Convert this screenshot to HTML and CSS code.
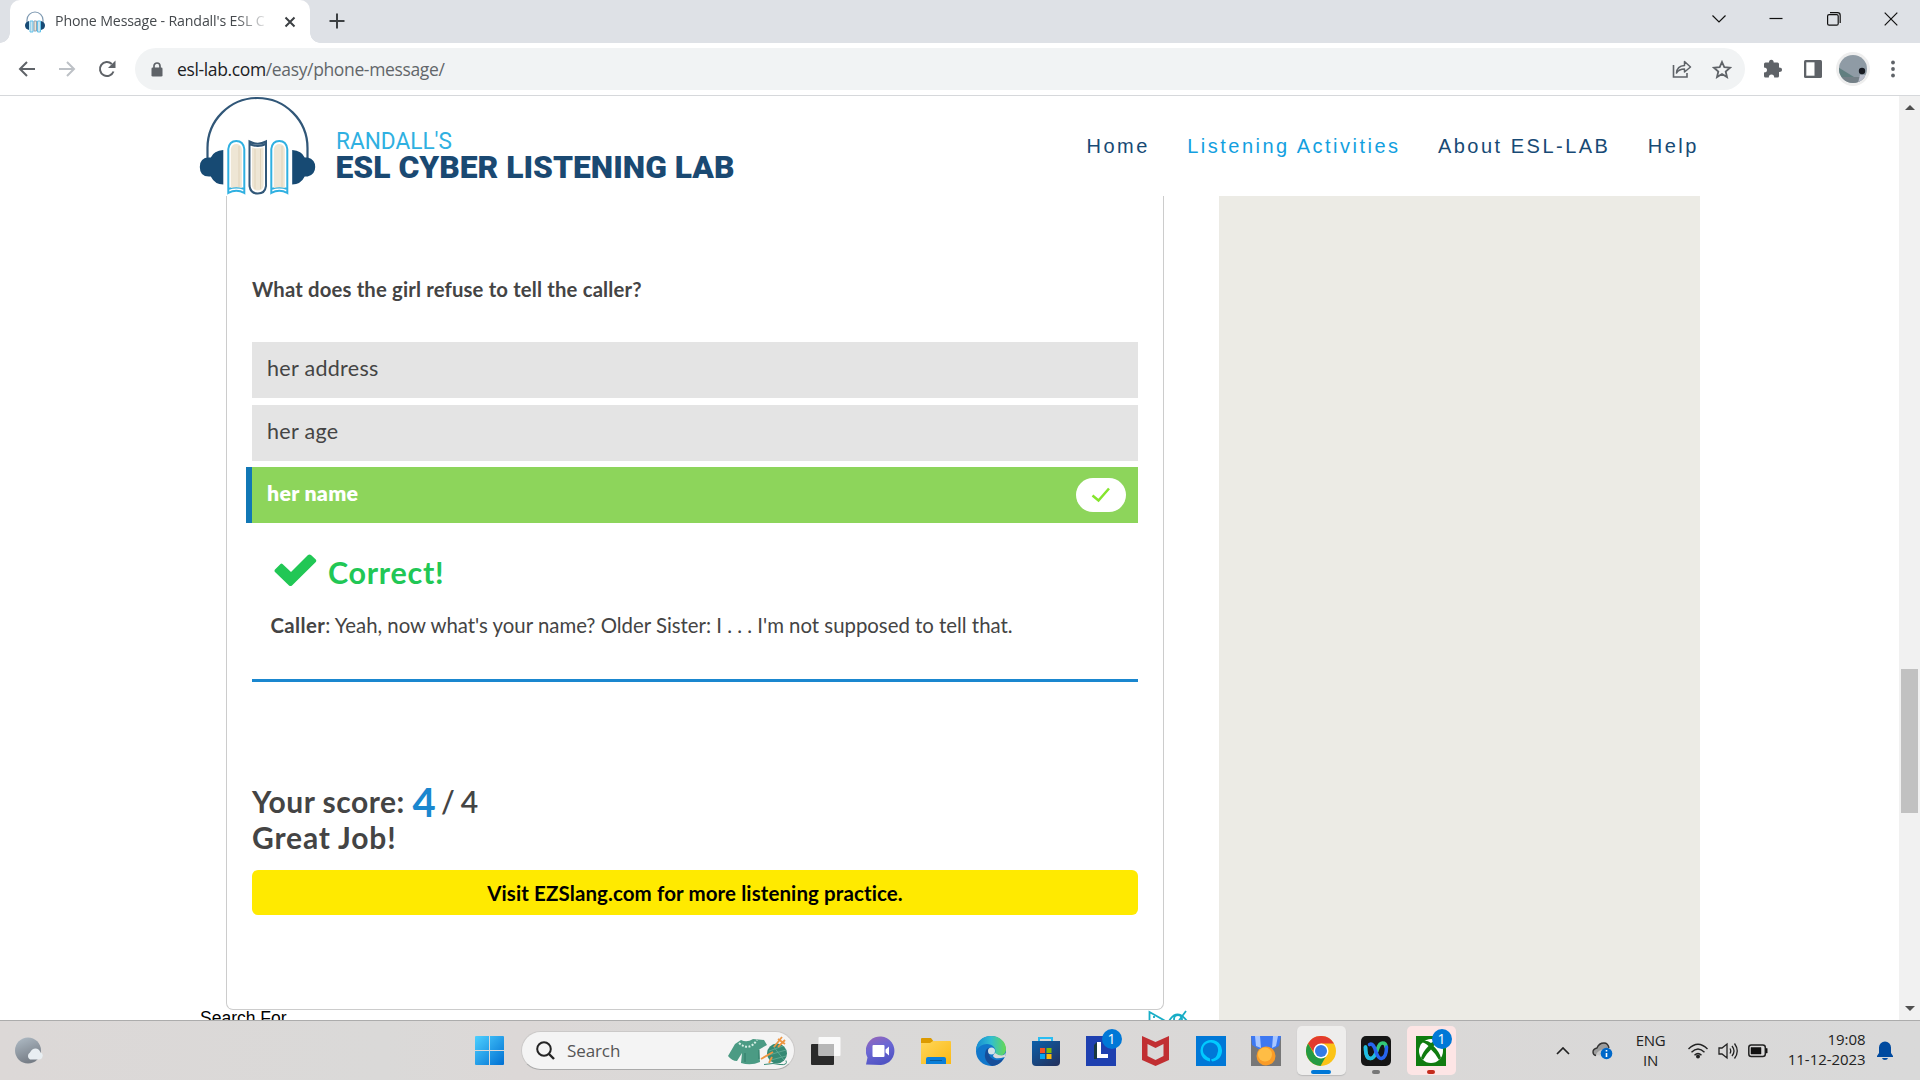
FILE: index.html
```html
<!DOCTYPE html>
<html lang="en">
<head>
<meta charset="utf-8">
<title>Phone Message - Randall's ESL Cyber Listening Lab</title>
<link rel="stylesheet" href="styles.css">
</head>
<body>
<div class="tabstrip">
  <div class="tab">
    <svg class="favicon" width="20" height="22" viewBox="0 0 20 22"><path d="M2 12V9a8 8 0 0 1 16 0v3" fill="none" stroke="#7f9ab2" stroke-width="1.2"/><path d="M4 10v9Q0 18 0 14.500T4 10zM16 10v9q4-1 4-4.500T16 10z" fill="#174a75"/><path d="M5 10h3v11H5zM12.500 10h3v11h-3z" fill="#cfe5ee" stroke="#62c2ea"/><path d="M9 10h2.500v10H9z" fill="#eee3cf" stroke="#8fa3b5"/></svg>
    <span class="tab-title">Phone Message - Randall's ESL C</span>
    <svg width="12" height="12" viewBox="0 0 12 12"><path d="M1.500 1.500l9 9M10.500 1.500l-9 9" stroke="#3c4043" stroke-width="2"/></svg>
  </div>
  <svg class="new-tab" width="16" height="16" viewBox="0 0 16 16"><path d="M8 .5v15M.5 8h15" stroke="#3c4043" stroke-width="2"/></svg>
  <div class="window-buttons">
    <svg width="14" height="14" viewBox="0 0 14 14"><path d="M.5 3.500L7 10l6.500-6.500"/></svg>
    <svg width="14" height="14" viewBox="0 0 14 14"><path d="M.5 6.500h13"/></svg>
    <svg width="14" height="14" viewBox="0 0 14 14"><rect x=".6" y="2.600" width="10.600" height="10.600" rx="1.500"/><path d="M3 .7h7.500q2.700 0 2.700 2.700V11"/></svg>
    <svg width="14" height="14" viewBox="0 0 14 14"><path d="M.7.700l12.600 12.600M13.300.700L.7 13.300"/></svg>
  </div>
</div>
<div class="toolbar">
  <div class="nav-buttons">
    <svg width="18" height="16" viewBox="0 0 18 16"><path d="M17 8H2M9 1L2 8l7 7" fill="none" stroke="#5f6368" stroke-width="2"/></svg>
    <svg width="18" height="16" viewBox="0 0 18 16"><path d="M1 8h15M9 1l7 7-7 7" fill="none" stroke="#bdc1c6" stroke-width="2"/></svg>
    <svg width="18" height="18" viewBox="0 0 18 18"><path d="M15.500 11.500A7 7 0 1 1 13.800 4" fill="none" stroke="#5f6368" stroke-width="2"/><path d="M17.500.500v7.500H10z" fill="#5f6368"/></svg>
  </div>
  <div class="omnibox">
    <svg width="12" height="15" viewBox="0 0 12 15"><path d="M3 6V4a3 3 0 0 1 6 0v2" fill="none" stroke="#5f6368" stroke-width="1.700"/><rect x=".5" y="5.500" width="11" height="9" rx="1.300" fill="#5f6368"/></svg>
    <span class="url"><b>esl-lab.com</b>/easy/phone-message/</span>
    <svg class="share" width="20" height="18" viewBox="0 0 20 18"><path d="M1.500 5v12H15v-4" fill="none" stroke="#5f6368" stroke-width="1.600"/><path d="M4.500 13q.5-7 8-7.500V1.500L18.500 7l-6 5V9Q7 9 4.500 13z" fill="none" stroke="#5f6368" stroke-width="1.500" stroke-linejoin="round"/></svg>
    <svg width="20" height="19" viewBox="0 0 20 19"><path d="M10 2l2.300 5.200 5.700.5-4.300 3.800 1.300 5.600-5-3-5 3 1.300-5.600L2 7.700l5.700-.5z" fill="none" stroke="#5f6368" stroke-width="1.800"/></svg>
  </div>
  <div class="toolbar-actions">
    <svg width="20" height="20" viewBox="0 0 20 20"><path d="M1 5q0-1.500 1.500-1.500H6Q6 .7 8.300.700t2.400 2.800h3.800Q16 3.500 16 5v3.500q3 0 3 2.300T16 13v4q0 1.500-1.500 1.500h-3.300q0-3-2.700-3t-2.700 3H2.500Q1 18.500 1 17v-3.500q3 0 3-2.500t-3-2.500z" fill="#5f6368"/></svg>
    <svg width="18" height="18" viewBox="0 0 18 18"><rect width="18" height="18" rx="1.500" fill="#5f6368"/><path d="M2.300 2.300h8.200v13.400H2.300z" fill="#fff"/></svg>
    <svg width="34" height="34" viewBox="0 0 34 34"><defs><clipPath id="av"><circle cx="17" cy="17" r="14"/></clipPath></defs><circle cx="17" cy="17" r="17" fill="#eee"/><g clip-path="url(#av)"><path d="M0 0h34v34H0z" fill="#8f9ba5"/><path d="M2 15l16 10H2z" fill="#617f80"/><path d="M0 25h34v9H0z" fill="#748087"/><circle cx="26" cy="19" r="3.200" fill="#171a22"/><path d="M22 31l2-8h5v8z" fill="#b9bdcb"/></g></svg>
    <svg width="4" height="18" viewBox="0 0 4 18"><g fill="#5f6368"><circle cx="2" cy="2.500" r="1.900"/><circle cx="2" cy="9" r="1.900"/><circle cx="2" cy="15.500" r="1.900"/></g></svg>
  </div>
</div>

<div class="viewport">
  <div class="page">
    <header class="site-header">
      <svg class="logo" width="538" height="100" viewBox="199 96 538 100">
        <path d="M207.500 162V148a50 50 0 0 1 100 0V162" fill="none" stroke="#315778" stroke-width="2.200"/>
        <g fill="#174a73"><path d="M223.300 150v34.500q-8.500 0-12.500-8-11 1-11-9.500t11-9.500q3-7 12.500-7.500z"/><path d="M292.200 150v34.500q8.500 0 12.500-8h3q7.500-2 7.500-9.500t-7.500-9.500h-3q-3-7-12.500-7.500z"/></g>
        <g fill="#fff" stroke="#2fb0e1" stroke-width="2"><path d="M228.300 193V149q1-8 8-8t8 8v44q-8-4.500-16 0zM228.300 189q8-3 16 0"/><path d="M271.300 193V149q1-8 8-8t8 8v44q-8-4.500-16 0zM271.300 189q8-3 16 0"/><path stroke="#315778" d="M249.500 141.500q8.200 4.500 16.500 0V186q-1 7.500-8.200 7.500t-8.300-7.500zM249.500 144q8.200 4 16.500 0"/></g>
        <g fill="#eee6d5"><path d="M230.800 188V149q1-5 5.500-5t5.500 5v39q-5.500-1.500-11 0zM273.800 188V149q1-5 5.500-5t5.500 5v39q-5.500-1.500-11 0zM252 147.500q5.700 1.500 11.500 0V186q-1 4.500-5.700 4.500T252 186z"/></g>
        <path d="M239 146v41M282 146v41M255 149v40M260.500 149v40" stroke="#e0d3ba"/>
        <text class="logo-top" x="336" y="148.500" textLength="116" lengthAdjust="spacingAndGlyphs">RANDALL'S</text>
        <text class="logo-main" x="335.500" y="178" textLength="399" lengthAdjust="spacingAndGlyphs">ESL CYBER LISTENING LAB</text>
      </svg>
      <nav class="site-nav"><a>Home</a><a class="active">Listening Activities</a><a>About ESL-LAB</a><a>Help</a></nav>
    </header>
    <div class="columns">
      <main class="main">
        <section class="quiz">
          <h3 class="question">What does the girl refuse to tell the caller?</h3>
          <ul class="answers">
            <li>her address</li>
            <li>her age</li>
            <li class="chosen">her name<span class="pill"><svg width="20" height="16" viewBox="0 0 20 16"><path d="M1.500 8.500l6 5L18 1.500" fill="none" stroke="#85e52d" stroke-width="2.500"/></svg></span></li>
          </ul>
          <div class="feedback">
            <div class="verdict"><svg width="43" height="33" viewBox="0 0 43 33"><path d="M1 15.500L6.500 10q1-.8 2 0l8.500 8L34 1q1.500-1.200 3 0l4.800 4.500q1 1.300 0 2.500L18 31.500q-1.500 1.200-3 0L1 18q-1-1.300 0-2.500z" fill="#21c755"/></svg><span>Correct!</span></div>
            <p class="explain"><b>Caller</b>: Yeah, now what's your name? Older Sister: I . . . I'm not supposed to tell that.</p>
          </div>
          <div class="score"><div>Your score: <span class="points">4</span> <span class="total">/ 4</span></div><div class="praise">Great Job!</div></div>
          <a class="promo">Visit EZSlang.com for more listening practice.</a>
        </section>
        <div class="search-row"><span>Search For</span>
          <svg width="42" height="20" viewBox="0 0 42 20" fill="none" stroke="#17adc6" stroke-width="1.800"><path d="M1.500 20V2l15 8.500-8 5"/><path d="M6 6v2M6 10v8"/><path d="M21 11q8-13 18 0M24 20L38 1"/><circle cx="30" cy="9" r="4"/></svg></div>
      </main>
      <aside class="sidebar"></aside>
    </div>
  </div>
  <div class="scrollbar"><i class="arrow-up"></i><i class="thumb"></i><i class="arrow-down"></i></div>
</div>

<div class="taskbar">
  <svg class="weather" width="28" height="28" viewBox="0 0 28 28"><defs><linearGradient id="moon" x2=".4" y2="1"><stop stop-color="#b1bdc7"/><stop offset="1" stop-color="#777e87"/></linearGradient></defs><circle cx="13" cy="13.500" r="13" fill="url(#moon)"/><path d="M15 22.500a4 4 0 0 1 0-7q2-4 5.500-4t5 4q3 1 2 4-.5 3-3.500 3z" fill="#e8eef2"/></svg>
  <svg class="start" width="29" height="29" viewBox="0 0 29 29"><defs><linearGradient id="win" x2="1" y2="1"><stop stop-color="#4dd0ff"/><stop offset="1" stop-color="#006fd2"/></linearGradient></defs><path d="M1 0h13v14H0V1q0-1 1-1zM15 0h13q1 0 1 1v13H15zM0 15h14v14H1q-1 0-1-1zM15 15h14v13q0 1-1 1H15z" fill="url(#win)"/></svg>
  <div class="search">
    <svg width="19" height="19" viewBox="0 0 19 19"><circle cx="8" cy="8" r="6.800" fill="none" stroke="#242424" stroke-width="2"/><path d="M12.500 12.500L18 18" stroke="#242424" stroke-width="2.400"/></svg>
    <span>Search</span>
    <svg class="knit" width="60" height="30" viewBox="0 0 60 30"><path d="M13 4q6 3 12-1l11 1 3 5-7 4-1 1 1 12q-9 4-19 1l1-10-5 8q-5 0-9-5L7 8z" fill="#4b9b84"/><path d="M11 7q10 9 18-3" fill="none" stroke="#d7eee4" stroke-width="2" stroke-dasharray="2 1.500"/><path d="M17 17v9M31 14v9" stroke="#2f7a66"/><circle cx="49" cy="17.500" r="10" fill="#368a74"/><path d="M41 15l14-5M41 19l17-5M43 24l15-4M45 10l11 14" stroke="#5fa892" stroke-width="1"/><path d="M33 23l12-7M41 27l3-6M46 11l8-10M50 3l7 5M50 11l7-7" stroke="#ee9642" stroke-width="1.800"/><path d="M36 28.500q10-2 16 0 8 1 6-4" fill="none" stroke="#368a74"/></svg>
  </div>
  <div class="apps">
    <div class="app"><svg width="30" height="30" viewBox="0 0 30 30"><rect y="8" width="23" height="21" rx="1" fill="#2a2a2a"/><rect x="7.500" y="1" width="22" height="19" rx="1" fill="#fafafa"/><path d="M7.500 8H23v12H8.500q-1 0-1-1z" fill="#b7b7b7"/></svg></div>
    <div class="app"><svg width="30" height="30" viewBox="0 0 30 30"><defs><linearGradient id="chat" y2="1" x2=".4"><stop stop-color="#9a65b5"/><stop offset=".5" stop-color="#6b67d4"/><stop offset="1" stop-color="#5154c4"/></linearGradient></defs><path d="M0 28.500l1.500-7A14.300 14.300 0 1 1 15 29z" fill="url(#chat)"/><rect x="6.500" y="9" width="12" height="12" rx="1" fill="#fff"/><path d="M19.500 13.500l3.500-3v9l-3.500-3z" fill="#fff"/></svg></div>
    <div class="app"><svg width="30" height="30" viewBox="0 0 30 30"><defs><linearGradient id="fold" y2="1"><stop stop-color="#ffd65a"/><stop offset="1" stop-color="#fbb914"/></linearGradient></defs><path d="M0 3q0-1 1-1h9l3 4v6H0z" fill="#dc9a00"/><path d="M0 7h9l3-2h17q1 0 1 1v22H0z" fill="url(#fold)"/><path d="M5 28v-5q0-2 2-2h16q2 0 2 2v5z" fill="#0a7fd9"/><path d="M9 24.500h12" stroke="#075a9c"/></svg></div>
    <div class="app"><svg width="30" height="30" viewBox="0 0 30 30"><defs><linearGradient id="edge" x2="1"><stop stop-color="#168bd3"/><stop offset=".5" stop-color="#31bed0"/><stop offset="1" stop-color="#67d952"/></linearGradient></defs><circle cx="15" cy="15" r="15" fill="#1177cb"/><path d="M0 15C0 5 7 0 15 0c9 0 15 6 15 13 0 5-4 8-9 7-3 0-4-1-2-3 2-5-3-9-8-9Q4 8 0 15z" fill="url(#edge)"/><path d="M10 14q-4 10 6 16 7 0 12-8-6 4-11 1-5-3-4-8 1-2 3-3-4-1-6 2z" fill="#164e9a"/><path d="M19 17q-2 2-2 3 2 4 12 1l1-4q-4 5-11 0z" fill="#dad9d9"/><circle cx="15.500" cy="15" r="3.500" fill="#d2e1e9"/></svg></div>
    <div class="app"><svg width="30" height="30" viewBox="0 0 30 30"><defs><linearGradient id="store" x2=".8" y2="1"><stop stop-color="#0c60aa"/><stop offset="1" stop-color="#223462"/></linearGradient></defs><path d="M8 7V2h13v5" fill="none" stroke="#29bdf2" stroke-width="2"/><path d="M1 5h28v21q0 4-4 4H5q-4 0-4-4z" fill="url(#store)"/><path d="M9 12h5v5H9z" fill="#f35325"/><path d="M15.500 12h5v5h-5z" fill="#81bc06"/><path d="M9 18h5v5H9z" fill="#05a6f0"/><path d="M15.500 18h5v5h-5z" fill="#ffba08"/></svg></div>
    <div class="app"><svg width="30" height="30" viewBox="0 0 30 30"><path d="M0 0h30v30H0z" fill="#1e40b0"/><path d="M11 6L8 9v14h3z" fill="#18383f"/><path d="M11 6h4v12h7v4H11z" fill="#fff"/></svg><span class="badge">1</span></div>
    <div class="app"><svg width="30" height="30" viewBox="0 0 30 30"><path d="M1 0l13.500 6L28 0v24l-13.500 6L1 24zM6.500 8v12l8 4 8-4V8l-8 4z" fill="#c12f32" fill-rule="evenodd"/></svg></div>
    <div class="app"><svg width="30" height="30" viewBox="0 0 30 30"><path d="M0 0h30v30H0z" fill="#0078d7"/><path d="M14 25.500a10.800 10.800 0 1 1 2.500 0q-1-.5-1.500-2 6-1.500 6.500-6.500a7.600 7.600 0 1 0-13.500 1q2.500 3 6 4.500z" fill="#00caff"/></svg></div>
    <div class="app"><svg width="30" height="30" viewBox="0 0 30 30"><path d="M0 0h30v30H0z" fill="#777"/><path d="M0 0h30L28 10l-9 5h-8L1 9z" fill="#3d78f2"/><path d="M4 0h5l1 12-5-2zM22 0h5l-2 10-4 2z" fill="#a9c7ff"/><circle cx="15" cy="20" r="9.500" fill="#fa9c27"/><circle cx="14" cy="18.500" r="7" fill="#ffbd45"/></svg></div>
    <div class="app open active-app"><svg width="30" height="30" viewBox="0 0 30 30"><circle cx="15" cy="15" r="15" fill="#fbc316"/><path d="M2 7.500A15 15 0 0 1 28 7.500H15L9 18z" fill="#e33b2e"/><path d="M2 7.500L8.800 19 15 22.200l5-2L14.500 30A15 15 0 0 1 2 7.500z" fill="#249a42"/><circle cx="15" cy="15" r="7.500" fill="#fff"/><circle cx="15" cy="15" r="6" fill="#347be5"/></svg></div>
    <div class="app open idle"><svg width="30" height="30" viewBox="0 0 30 30"><rect width="30" height="30" rx="5" fill="#151515"/><g fill="none" stroke-width="3.600" stroke-linecap="round"><path d="M4.500 11q0 11.500 5 11.500 4 0 7-9.500 2-6 5-6 3.500 0 3.500 4" stroke="#32c879"/><path d="M4.500 11q0 11.500 5 11.500 3.500 0 6-7" stroke="#20bce4"/><path d="M8.500 8.500q4-2 6.500 7.500 2.500 7 5.500 6.500 5-1 5-11.500" stroke="#2765ef"/></g></svg></div>
    <div class="app open alert"><svg width="30" height="30" viewBox="0 0 30 30"><path d="M0 0h30v30H0z" fill="#107c10"/><circle cx="15" cy="15" r="12" fill="#fff"/><path d="M7 5q4-1 8 2 4-3 8-2l1.500 1.500q-3-.5-7 3.500 6 6 7.500 12l-2 2q-3-6-8-10.500-5 4.500-8 10.500l-2-2q1.500-6 7.500-12-4-4-7-3.500z" fill="#107c10"/></svg><span class="badge">1</span></div>
  </div>
  <div class="tray">
    <svg class="chev" width="14" height="8" viewBox="0 0 14 8"><path d="M1 7l6-6 6 6" fill="none" stroke="#222" stroke-width="1.700"/></svg>
    <svg class="cloud" width="21" height="18" viewBox="0 0 21 18"><path d="M4 13.500Q1 13 1 10t4-4q2-5 7-5 4 0 5 5" fill="#9c9c9c" stroke="#333" stroke-width="1.400"/><path d="M4 13q1-5 11-7l3 2-6 6z" fill="#c8c8c8"/><circle cx="14.500" cy="11.500" r="5.800" fill="#0068c9"/><path d="M14.500 8v1.500M14.500 11v4" stroke="#fff" stroke-width="1.600"/></svg>
    <div class="lang">ENG<br>IN</div>
    <svg class="wifi" width="20" height="16" viewBox="0 0 20 16"><g fill="none" stroke="#222" stroke-width="1.400"><path d="M.5 6q9.500-9.500 19 0M3.500 9.300q6.500-6.600 13 0M6.500 12.300q3.500-3.500 7 0"/></g><circle cx="10" cy="13.500" r="2" fill="#222"/></svg>
    <svg class="speaker" width="20" height="18" viewBox="0 0 20 18"><path d="M1 6h3l5-4v14l-5-4H1zM12 6.500q1.500 2.500 0 5M14 4q4 5 0 10M16.500 1.500q5.500 7.500 0 15" fill="none" stroke="#222" stroke-width="1.300"/></svg>
    <svg class="battery" width="20" height="14" viewBox="0 0 20 14"><rect x=".8" y="1" width="16.500" height="11.500" rx="2.500" fill="none" stroke="#222" stroke-width="1.500"/><path d="M3 3.500h10v6.500H3zM18 4.500h1.200v4.500H18z" fill="#111" stroke="#111" stroke-width=".5"/></svg>
    <div class="clock">19:08<br>11-12-2023</div>
    <svg class="bell" width="16" height="19" viewBox="0 0 16 19"><path d="M2 12V6.500a6 6 0 0 1 12 0V12l2 3v1H0v-1zM5 17h6q-.5 2-3 2t-3-2z" fill="#004a9f"/></svg>
  </div>
</div>
</body>
</html>
```
FILE: styles.css
```css
* { box-sizing: border-box; }
html, body { margin: 0; height: 100%; overflow: hidden; }
body { display: flex; flex-direction: column; background: #fff; font-family: "Open Sans", "Noto Sans", sans-serif; }
svg { display: block; flex: none; }

/* browser chrome */
.tabstrip { display: flex; align-items: flex-start; height: 43px; flex: none; background: #dee1e6; padding-left: 10px; }
.tab { position: relative; display: flex; align-items: center; width: 300px; height: 43px; padding: 0 14px 0 15px; background: #fff; border-radius: 10px 10px 0 0; }
.tab::before, .tab::after { content: ""; position: absolute; bottom: 0; width: 10px; height: 10px; }
.tab::before { right: 100%; background: radial-gradient(circle at 0 0, transparent 9.500px, #fff 10px); }
.tab::after { left: 100%; background: radial-gradient(circle at 100% 0, transparent 9.500px, #fff 10px); }
.tab-title { flex: none; width: 218px; margin: 0 11px 2px 10px; white-space: nowrap; font-size: 14.200px; letter-spacing: -.15px; color: #45494d; mask-image: linear-gradient(90deg, #000 180px, transparent 215px); }
.new-tab { margin: 13px 0 0 19px; }
.window-buttons { display: flex; gap: 43.300px; margin: 12px 22px 0 auto; }
.window-buttons path, .window-buttons rect { fill: none; stroke: #111; stroke-width: 1.200; }
.toolbar { display: flex; align-items: center; height: 53px; flex: none; border-bottom: 1px solid #d6d8db; background: #fff; }
.nav-buttons { display: flex; align-items: center; gap: 22px; width: 135px; padding-left: 18px; }
.omnibox { display: flex; align-items: center; width: 1610px; height: 42px; padding: 0 13px 0 16px; border-radius: 21px; background: #f1f3f4; }
.url { margin: 0 auto 0 14px; font-size: 17.500px; letter-spacing: -.36px; color: #62666a; }
.url b { font-weight: 400; color: #202124; }
.share { margin-right: 20px; }
.toolbar-actions { display: flex; align-items: center; margin-left: 18px; }
.toolbar-actions svg:nth-child(2) { margin-left: 21px; }
.toolbar-actions svg:nth-child(3) { margin-left: 14px; }
.toolbar-actions svg:nth-child(4) { margin-left: 21px; }

/* page */
.viewport { display: flex; height: 924px; flex: none; overflow: hidden; }
.page { width: 1899px; padding-left: 199px; }
.site-header { display: flex; height: 100px; }
.logo-top { font: 400 24px Roboto, sans-serif; fill: #2fb0e1; }
.logo-main { font: 900 32px Roboto, sans-serif; fill: #1a4972; }
.site-nav { display: flex; gap: 37.300px; margin-left: 349.500px; padding-top: 38px; white-space: nowrap; font: 20px/24px "Liberation Sans", Arial, sans-serif; letter-spacing: 2.500px; color: #174a75; }
.site-nav .active { color: #139fe0; }
.columns { display: flex; height: 824px; }
.main { width: 1020px; }
.quiz { width: 938px; height: 814px; margin-left: 27px; padding: 0 25px; border: 1px solid #ccc; border-top: 0; border-radius: 0 0 7px 7px; font-family: Lato, sans-serif; color: #444; }
.question { margin: 0; padding-top: 79px; height: 146px; font-size: 20.300px; line-height: 28px; font-weight: 700; letter-spacing: .16px; }
.answers { margin: 0; padding: 0; height: 182px; list-style: none; }
.answers li { display: flex; align-items: center; height: 56px; margin-bottom: 6.500px; padding: 0 12px 4px 15px; background: #e4e4e4; font-size: 21.500px; letter-spacing: .3px; }
.answers .chosen { margin-left: -6px; border-left: 6px solid #1177b5; padding-bottom: 0; background: #8dd55b; color: #fff; font-weight: 800; font-size: 21.300px; line-height: 52px; align-items: flex-start; }
.pill { display: flex; align-items: center; justify-content: center; width: 50px; height: 34px; margin: 11px 0 0 auto; border-radius: 17px; background: #fff; }
.feedback { height: 158px; border-bottom: 3px solid #1a87cf; }
.verdict { display: flex; gap: 11px; height: 90px; padding: 29px 0 0 22px; font-size: 30.500px; line-height: 38px; font-weight: 700; letter-spacing: .7px; color: #21c755; }
.verdict svg { margin-top: 1px; }
.explain { margin: -1px 0 0; padding-left: 18.500px; font-size: 20.360px; line-height: 24px; white-space: nowrap; }
.explain b { font-weight: 700; letter-spacing: .4px; }
.score { height: 188px; padding-top: 101px; font-size: 30px; line-height: 36px; font-weight: 700; letter-spacing: .5px; }
.score div { height: 36px; white-space: nowrap; }
.score .praise { letter-spacing: .85px; }
.points { font-size: 40px; line-height: 36px; color: #1a87cf; vertical-align: -4px; }
.total { margin-left: -3px; font-weight: 600; letter-spacing: -.7px; }
.promo { display: block; height: 45px; border-radius: 6px; background: #ffea00; color: #000; text-align: center; font-size: 20.500px; line-height: 47px; font-weight: 700; letter-spacing: .1px; }
.search-row { display: flex; justify-content: space-between; width: 991px; padding-left: 1px; color: #000; font: 17.500px/17px "Liberation Sans", sans-serif; }
.sidebar { width: 481px; background: #ecebe5; }
.scrollbar { display: flex; flex-direction: column; align-items: center; width: 21px; background: #f1f1f1; padding: 9px 0; }
.arrow-up, .arrow-down { border: 5px solid transparent; }
.arrow-up { border-top: 0; border-bottom-color: #505050; }
.arrow-down { margin-top: auto; border-bottom: 0; border-top-color: #505050; }
.thumb { width: 17px; height: 144px; margin-top: 559px; background: #c1c1c1; }

/* taskbar */
.taskbar { display: flex; align-items: center; height: 60px; flex: none; padding-left: 15px; border-top: 1px solid #acacac; background: linear-gradient(90deg, #dcd8d7, #dad9d8 20%, #dcd8d7 27%, #dad9d8 40%, #dad8d7 70%, #d9d9d9); }
.start { margin-left: 432px; }
.search { display: flex; align-items: center; width: 274px; height: 39px; margin-left: 17px; padding: 0 6px 0 14px; border: 1px solid #cbc9c8; border-bottom-color: #aaa; border-radius: 20px; background: #f4f4f4; font-size: 17px; letter-spacing: -.1px; color: #555; }
.search span { margin: 0 auto 1px 12px; }
.apps { display: flex; margin-left: 3.500px; }
.app { position: relative; display: flex; flex: none; align-items: center; justify-content: center; width: 55px; height: 59px; }
.active-app, .alert { width: 49px; height: 49px; margin: 5px 3px; border-radius: 5px; background: #eeedec; box-shadow: 0 1px 1px #bbb; }
.alert { background: #fde5e5; box-shadow: none; }
.badge { position: absolute; left: 28px; top: 8px; width: 20px; height: 20px; border-radius: 50%; background: #0078d7; color: #fff; font-size: 14px; line-height: 20px; text-align: center; }
.alert .badge { left: 25px; top: 3px; }
.open::after { content: ""; position: absolute; bottom: 6px; width: 8px; height: 4px; border-radius: 2px; background: #777; }
.active-app::after { bottom: 1px; width: 20px; background: #0078d7; }
.alert::after { bottom: 1px; background: #c42b1c; }
.tray { display: flex; align-items: center; margin-left: 97px; color: #222; font-size: 15px; line-height: 20px; letter-spacing: -.3px; white-space: nowrap; }
.cloud { margin-left: 22px; }
.lang { width: 50px; margin: -2px 0 0 13px; text-align: center; }
.wifi { margin-left: 12px; }
.speaker { margin-left: 10px; }
.battery { margin-left: 10px; }
.clock { width: 98px; margin-top: -3px; text-align: right; letter-spacing: -.06px; }
.bell { margin-left: 11px; }
```
